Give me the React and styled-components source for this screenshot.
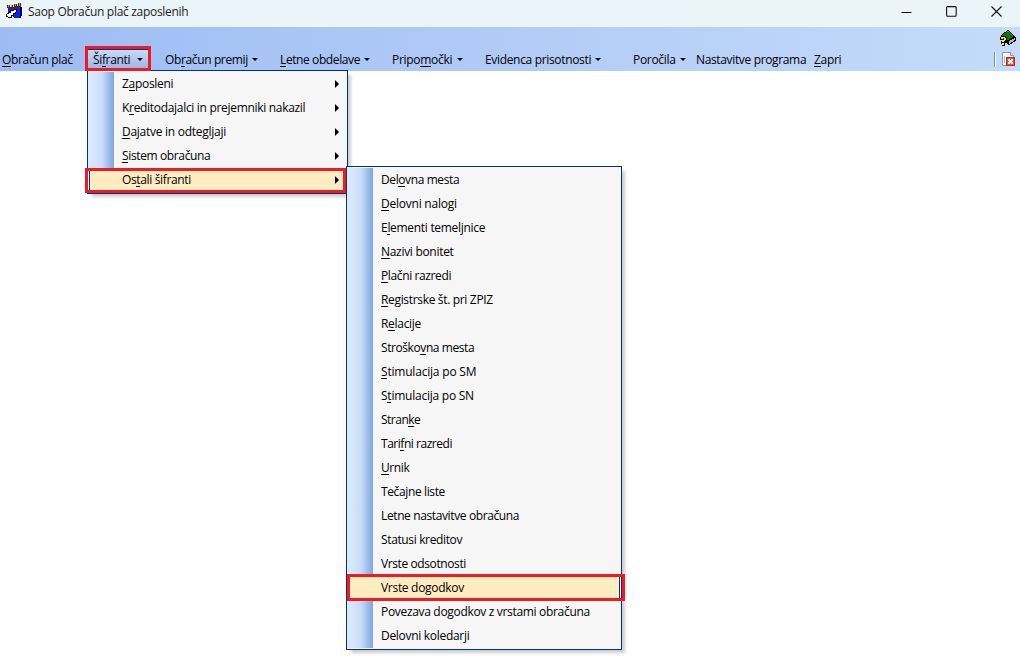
import styled, { createGlobalStyle, css } from "styled-components";

const GlobalStyle = createGlobalStyle`
  *, *::after {
    box-sizing: border-box;
  }

  body {
    margin: 0;
    background: #ffffff;
    color: #000000;
    font-family: "Open Sans", "Noto Sans", sans-serif;
    font-size: 12px;
    overflow: hidden;
  }
`

const Window = styled.div`
  width: 1020px;
  height: 656px;
  overflow: hidden;
  background: #ffffff;
`

const TitleBar = styled.header`
  height: 27px;
  display: flex;
  align-items: center;
  padding: 0 18px 5px 6px;
  background: #ebf4f8;
`

const Title = styled.h1`
  flex: 1;
  margin: 1px 0 0 5px;
  font-size: 12px;
  font-weight: 400;
  color: #1c1c1c;
  letter-spacing: -0.3px;
`

const Controls = styled.div`
  display: flex;
  align-items: center;
  gap: 34px;
`

const Toolbar = styled.div`
  height: 44px;
  display: flex;
  justify-content: space-between;
  background: linear-gradient(90deg, #9dbcf4 0%, #c5dbf9 100%);
`

const MenuBar = styled.nav`
  display: flex;
  align-items: flex-end;
`

const BarItem = styled.div`
  position: relative;
  width: ${(props) => props.$width}px;
  height: 25px;
  display: flex;
  align-items: center;
  margin-left: ${(props) => props.$before ?? 0}px;
  padding: 0 7px 0 2px;
  line-height: 16px;
  letter-spacing: ${(props) => props.$spacing ?? -0.3}px;
  white-space: nowrap;

  ${(props) => props.$open && css`
    background: linear-gradient(180deg, #d3e1f7, #93b2e6);
    padding-left: 8px;
  `}
`

const BarLabel = styled.span`
  width: ${(props) => props.$width}px;
  padding-top: 3px;
`

const DownArrow = styled.span`
  margin-top: 2px;
  border: 3px solid transparent;
  border-top-color: #000000;
  border-bottom: 0;
`

const RightArrow = styled.span`
  margin-top: -1px;
  border: 4px solid transparent;
  border-left-color: #000000;
  border-right: 0;
`

const Menu = styled.ul`
  position: absolute;
  left: ${(props) => props.$left}px;
  top: ${(props) => props.$top}px;
  width: ${(props) => props.$width}px;
  margin: 0;
  padding: 1px 0;
  list-style: none;
  border: 1px solid #00308f;
  background-color: #f6f6f6;
  background-image: linear-gradient(90deg, #deecfe 0, #c8dcf9 14px, #7ea5e0 26px, #f6f6f6 26px);
  background-origin: content-box;
  background-repeat: no-repeat;
  box-shadow: 4px 4px 3px -1px rgba(0, 0, 0, 0.2);
`

const MenuItem = styled.li`
  position: relative;
  height: 24px;
  display: flex;
  align-items: center;
  justify-content: space-between;
  padding: 0 8px 0 34px;
  letter-spacing: ${(props) => props.$spacing ?? -0.3}px;
  background: ${(props) => props.$marked ? "#ffecc0" : "transparent"};
`

// Red marker drawn over the chosen entry
const Marker = styled.div`
  position: absolute;
  z-index: 2;
  left: ${(props) => props.$left}px;
  right: ${(props) => props.$right}px;
  top: ${(props) => props.$top}px;
  bottom: ${(props) => props.$bottom}px;
  border: 3px solid #ed1c24;
  pointer-events: none;

  &::after {
    content: "";
    position: absolute;
    background: #f6f6f6;
    ${(props) => props.$edge === "top" && css`
      top: 0;
      left: 0;
      right: 0;
      height: 1px;
      background: #00308f;
    `}
    ${(props) => props.$edge === "left" && css`
      top: 0;
      bottom: 0;
      left: 0;
      width: 2px;
      border-right: 1px solid #00308f;
    `}
    ${(props) => props.$edge === "right" && css`
      top: 0;
      bottom: 0;
      right: 0;
      width: 3px;
      border: solid #00308f;
      border-width: 0 1px;
    `}
  }
`

const Key = styled.span`
  border-bottom: 1px solid #000000;
  display: inline-block;
  line-height: 13px;
`

const Side = styled.div`
  display: flex;
  flex-direction: column;
  align-items: flex-end;
  gap: 5px;
  padding: 3px 3px 0 0;
`

const SideRow = styled.div`
  display: flex;
  align-items: center;
  gap: 6px;
  padding-right: 1px;
`

const Divider = styled.div`
  width: 2px;
  height: 15px;
  border-left: 1px solid #6a8ccb;
  background: #ffffff;
`

const barItems = [
  { text: "_Obračun plač", width: 85, label: 76, spacing: -0.33 },
  { text: "Ši_franti", width: 66, label: 44, open: true, arrow: true, spacing: -0.35 },
  { text: "Ob_račun premij", width: 115, label: 87, arrow: true, before: 12, spacing: -0.37 },
  { text: "_Letne obdelave", width: 112, label: 84, arrow: true, spacing: -0.4 },
  { text: "Pripo_močki", width: 93, label: 65, arrow: true },
  { text: "Evidenca prisotnosti", width: 148, label: 110, arrow: true, spacing: -0.33 },
  { text: "Poročila", width: 63, label: 47, arrow: true },
  { text: "Nastavitve programa", width: 118, label: 112, spacing: -0.35 },
  { text: "_Zapri", width: 40, label: 32 },
]

const sifranti = [
  { text: "Z_aposleni" },
  { text: "K_reditodajalci in prejemniki nakazil", spacing: -0.31 },
  { text: "_Dajatve in odtegljaji", spacing: -0.27 },
  { text: "_Sistem obračuna", spacing: -0.37 },
  { text: "Os_tali šifranti", spacing: -0.35, marked: true },
]

const ostali = [
  { text: "Del_ovna mesta", spacing: -0.4 },
  { text: "_Delovni nalogi", spacing: -0.23 },
  { text: "E_lementi temeljnice" },
  { text: "_Nazivi bonitet" },
  { text: "_Plačni razredi", spacing: -0.38 },
  { text: "_Registrske št. pri ZPIZ", spacing: -0.33 },
  { text: "R_elacije" },
  { text: "Stroško_vna mesta", spacing: -0.42 },
  { text: "_Stimulacija po SM", spacing: -0.2 },
  { text: "S_timulacija po SN", spacing: -0.24 },
  { text: "Stran_ke", spacing: -0.5 },
  { text: "Tari_fni razredi", spacing: -0.47 },
  { text: "_Urnik", spacing: -0.4 },
  { text: "Tečajne liste", spacing: -0.37 },
  { text: "Letne nastavitve obračuna", spacing: -0.38 },
  { text: "Statusi kreditov", spacing: -0.36 },
  { text: "Vrste odsotnosti", spacing: -0.4 },
  { text: "Vrste dogodkov", marked: true },
  { text: "Povezava dogodkov z vrstami obračuna", spacing: -0.32 },
  { text: "Delovni koledarji" },
]

// "_" stands before the access key of a label
function Label({ text }) {
  const at = text.indexOf("_");
  if (at < 0) return text;
  return (
    <>
      {text.slice(0, at)}
      <Key>{text[at + 1]}</Key>
      {text.slice(at + 2)}
    </>
  );
}

function AppIcon() {
  return (
    <svg width="17" height="17" viewBox="0 0 17 17" shapeRendering="crispEdges">
      <path d="M2 4H15V14L14 15H9L2 9Z" fill="#0a24dc" />
      <path d="M14 4H16V11L15 15H13V13H14Z" fill="#000060" />
      <path d="M1 2H4V4H5V2H7V4H8V1H11V3H12V0H15V4H13V5H11V6H9V5H7V6H5V5H1Z" fill="#4a2a14" />
      <path d="M2 2H3V4H2ZM5 2H6V4H5ZM9 1H10V3H9ZM13 0H14V3H13Z" fill="#e8963a" />
      <path d="M0 13V11L2 10V9H4V7H8V6H11V9H10V11H8V13H6V15H2V14H0Z" fill="#00004c" />
      <path d="M1 12V11H3V10H5V8H8V7H10V9H9V10H7V12H5V14H2V13H1Z" fill="#ffffff" />
    </svg>
  );
}

function BookIcon() {
  return (
    <svg width="17" height="17" viewBox="0 0 17 17" shapeRendering="crispEdges">
      <path d="M1 5L8 0L16 7V11L9 15L6 13L1 9Z" fill="#000000" />
      <path d="M2 5L8 1L14 6L8 10L2 6Z" fill="#087a10" />
      <path d="M9 11L15 8V10L9 14Z" fill="#b8b8b8" />
      <path d="M0 7L2 6H5L7 8V10L5 12V15L4 16H2L1 12L2 10H0Z" fill="#000000" />
      <path d="M1 7H5V8H6V10H5V11H4V12H2V10H4V8H3V9H1ZM2 13H4V15H2Z" fill="#fff200" />
    </svg>
  );
}

function CloseDocIcon() {
  return (
    <svg width="14" height="15" viewBox="0 0 14 15">
      <path d="M0.5 0.5H8.5L11.5 3.5V13.5H0.5Z" fill="#f8fbff" stroke="#8198bb" />
      <path d="M8.5 0.5V3.5H11.5" fill="#dce7f6" stroke="#8198bb" />
      <path d="M2 4H3V11H2Z" fill="#a8b8d0" />
      <rect x="4.5" y="5.5" width="8" height="8" fill="#e5432a" stroke="#c42a18" />
      <path d="M6.3 7.3L10.7 11.7M10.7 7.3L6.3 11.7" stroke="#ffffff" strokeWidth="2" />
    </svg>
  );
}

function WindowControls() {
  return (
    <Controls>
      <svg width="11" height="11" viewBox="0 0 11 11" stroke="#111111">
        <path d="M0.5 6.5H10.5" />
      </svg>
      <svg width="11" height="11" viewBox="0 0 11 11" fill="none" stroke="#111111" strokeWidth="1.1">
        <rect x="0.6" y="0.6" width="9.6" height="9.6" rx="1" />
      </svg>
      <svg width="11" height="11" viewBox="0 0 11 11" stroke="#111111" strokeWidth="1.1">
        <path d="M0.5 0.5L10.5 10.5M10.5 0.5L0.5 10.5" />
      </svg>
    </Controls>
  );
}

function SubMenu() {
  return (
    <Menu $left={258} $top={-2} $width={276}>
      {ostali.map((item) => (
        <MenuItem key={item.text} $marked={item.marked} $spacing={item.spacing}>
          <span><Label text={item.text} /></span>
          {item.marked && <Marker $left={0} $right={-4} $top={-2} $bottom={-1} $edge="right" />}
        </MenuItem>
      ))}
    </Menu>
  );
}

function MainMenu() {
  return (
    <Menu $left={2} $top={24} $width={261}>
      {sifranti.map((item) => (
        <MenuItem key={item.text} $marked={item.marked} $spacing={item.spacing}>
          <span><Label text={item.text} /></span>
          <RightArrow />
          {item.marked && <Marker $left={-3} $right={1} $top={0} $bottom={-1} $edge="left" />}
          {item.marked && <SubMenu />}
        </MenuItem>
      ))}
    </Menu>
  );
}

export default function App() {
  return (
    <Window>
      <GlobalStyle />
      <TitleBar>
        <AppIcon />
        <Title>Saop Obračun plač zaposlenih</Title>
        <WindowControls />
      </TitleBar>
      <Toolbar>
        <MenuBar>
          {barItems.map((item) => (
            <BarItem
              key={item.text}
              $width={item.width}
              $before={item.before}
              $open={item.open}
              $spacing={item.spacing}
            >
              <BarLabel $width={item.label}><Label text={item.text} /></BarLabel>
              {item.arrow && <DownArrow />}
              {item.open && <MainMenu />}
              {item.open && <Marker $left={0} $right={0} $top={0} $bottom={0} $edge="top" />}
            </BarItem>
          ))}
        </MenuBar>
        <Side>
          <BookIcon />
          <SideRow>
            <Divider />
            <CloseDocIcon />
          </SideRow>
        </Side>
      </Toolbar>
    </Window>
  );
}
